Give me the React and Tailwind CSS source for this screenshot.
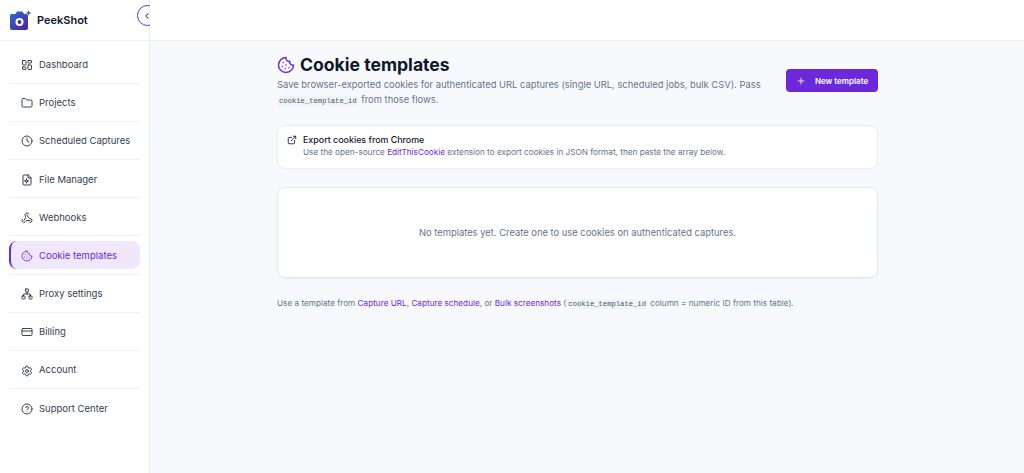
import React from "react";
import {
  LayoutDashboard,
  Folder,
  Clock,
  Webhook,
  Cookie,
  Network,
  CreditCard,
  Settings,
  CircleHelp,
  ExternalLink,
  Plus,
  ChevronLeft,
} from "lucide-react";

// File with a small cog in the middle, lucide has no centred version
const FileGear = ({ size, strokeWidth, className }) => (
  <svg
    width={size}
    height={size}
    viewBox="0 0 24 24"
    fill="none"
    stroke="currentColor"
    strokeWidth={strokeWidth}
    strokeLinecap="round"
    strokeLinejoin="round"
    className={className}
  >
    <path d="M14 2H6a2 2 0 0 0-2 2v16a2 2 0 0 0 2 2h12a2 2 0 0 0 2-2V8z" />
    <path d="M14 2v6h6" />
    <circle cx="11" cy="14" r="2.2" />
    <path d="M11 9.8v1.6M11 16.6v1.6M7 14h1.6M13.4 14H15" />
  </svg>
);

const NAV_ITEMS = [
  { label: "Dashboard", icon: LayoutDashboard },
  { label: "Projects", icon: Folder },
  { label: "Scheduled Captures", icon: Clock },
  { label: "File Manager", icon: FileGear },
  { label: "Webhooks", icon: Webhook },
  { label: "Cookie templates", icon: Cookie, active: true },
  { label: "Proxy settings", icon: Network },
  { label: "Billing", icon: CreditCard },
  { label: "Account", icon: Settings },
  { label: "Support Center", icon: CircleHelp },
];

const Logo = () => (
  <svg width="22" height="20" viewBox="0 0 22 20" className="shrink-0">
    <defs>
      <linearGradient id="logoFill" x1="0" y1="0" x2="1" y2="1">
        <stop offset="0" stopColor="#2f6fc0" />
        <stop offset="1" stopColor="#4a1fa8" />
      </linearGradient>
    </defs>
    <path
      d="M1.5 4h4L7 1.5h5.5L14 4h2a2 2 0 0 1 2 2v12a2 2 0 0 1-2 2H2a2 2 0 0 1-2-2V5.5A1.5 1.5 0 0 1 1.5 4z"
      fill="url(#logoFill)"
    />
    <circle cx="9.5" cy="12" r="4" fill="#fff" />
    <circle cx="9.5" cy="12" r="1.9" fill="#3b2fa8" />
    <path
      d="M18.5 0l.8 2.2 2.2.8-2.2.8-.8 2.2-.8-2.2-2.2-.8 2.2-.8z"
      fill="#4f46b8"
    />
  </svg>
);

const Sidebar = () => (
  <aside className="w-[150px] shrink-0 border-r border-[#e9edf3] bg-white min-h-[473px]">
    <div className="relative h-[41px] border-b border-[#eef1f5] flex items-center pl-[10px] gap-[5px]">
      <Logo />
      <span className="text-[11px] font-semibold text-[#0f172a]">PeekShot</span>
      <div className="absolute left-[137px] top-[5px] w-[13px] h-[21px] overflow-hidden">
        <div className="w-[21px] h-[21px] rounded-full border border-[#6d28d9] bg-white flex items-center justify-start pl-[4px]">
          <ChevronLeft size={10} strokeWidth={2.5} className="text-[#334155]" />
        </div>
      </div>
    </div>
    <nav className="px-[9px] pt-[4.5px] flex flex-col">
      {NAV_ITEMS.map((item, i) => {
        const Icon = item.icon;
        return (
          <div
            key={item.label}
            className={
              i < NAV_ITEMS.length - 1
                ? "py-[4.5px] border-b border-[#eef1f5]"
                : "py-[4.5px]"
            }
          >
            <div
              className={
                item.active
                  ? "h-[28.2px] flex items-center gap-[6px] pt-[2px] pl-[10px] rounded-lg bg-[#f0e8fa] border-l-2 border-[#6d28d9] text-[#6d28d9]"
                  : "h-[28.2px] flex items-center gap-[6px] pt-[2px] pl-[12px] text-[#334155]"
              }
            >
              <Icon size={12} strokeWidth={1.75} className={item.active ? "" : "text-[#1e293b]"} />
              <span className="text-[9.5px] whitespace-nowrap">{item.label}</span>
            </div>
          </div>
        );
      })}
    </nav>
  </aside>
);

const Code = ({ children }) => (
  <code className="font-['Liberation_Mono',monospace] text-[7.2px] bg-[#f1f3f7] text-[#475569] rounded-sm px-[2px] py-[1px]">
    {children}
  </code>
);

const Link = ({ children }) => <a className="text-[#6d28d9]">{children}</a>;

export default function App() {
  return (
    <div className="flex w-full h-[473px] overflow-hidden bg-[#f8f9fc] font-['Inter',sans-serif]">
      <Sidebar />
      <div className="flex-1 flex flex-col">
        <div className="h-[41px] shrink-0 bg-white border-b border-[#eef1f5]" />
        <main className="w-[601px] ml-[127px]">
          <div className="flex items-start justify-between pt-[13px]">
            <div className="w-[495px]">
              <div className="flex items-center gap-[5px]">
                <Cookie size={18} strokeWidth={2} className="text-[#6d28d9]" />
                <h1 className="text-[17.6px] leading-[22px] font-bold text-[#0f172a]">Cookie templates</h1>
              </div>
              <p className="text-[9.4px] leading-[15px] mt-[1px] text-[#64748b]">
                Save browser-exported cookies for authenticated URL captures (single URL, scheduled jobs, bulk CSV). Pass{" "}
                <Code>cookie_template_id</Code> from those flows.
              </p>
            </div>
            <button className="mt-[15px] w-[92px] h-[23px] flex items-center justify-center gap-[9px] rounded bg-[#6d28d9] text-white text-[8px] font-semibold">
              <Plus size={10} strokeWidth={2} />
              New template
            </button>
          </div>

          <div className="mt-[16px] h-[44px] rounded-lg border border-[#e9edf3] bg-white flex items-start gap-[6px] pl-[9px] pt-[8px]">
            <ExternalLink size={10} strokeWidth={2} className="text-[#0f172a] mt-[1px]" />
            <div>
              <div className="text-[8.9px] leading-[12px] font-medium text-[#0f172a]">Export cookies from Chrome</div>
              <div className="text-[8.2px] leading-[12px] text-[#64748b]">
                Use the open-source <Link>EditThisCookie</Link> extension to export cookies in JSON format, then paste the array below.
              </div>
            </div>
          </div>

          <div className="mt-[18px] h-[91px] rounded-lg border border-[#e5e9f0] bg-white flex items-center justify-center pt-[2px] shadow-xs">
            <span className="text-[9.4px] text-[#64748b]">
              No templates yet. Create one to use cookies on authenticated captures.
            </span>
          </div>

          <p className="mt-[19px] text-[8.2px] leading-[12px] text-[#64748b]">
            Use a template from <Link>Capture URL</Link>, <Link>Capture schedule</Link>, or <Link>Bulk screenshots</Link> (
            <Code>cookie_template_id</Code> column = numeric ID from this table).
          </p>
        </main>
      </div>
    </div>
  );
}
